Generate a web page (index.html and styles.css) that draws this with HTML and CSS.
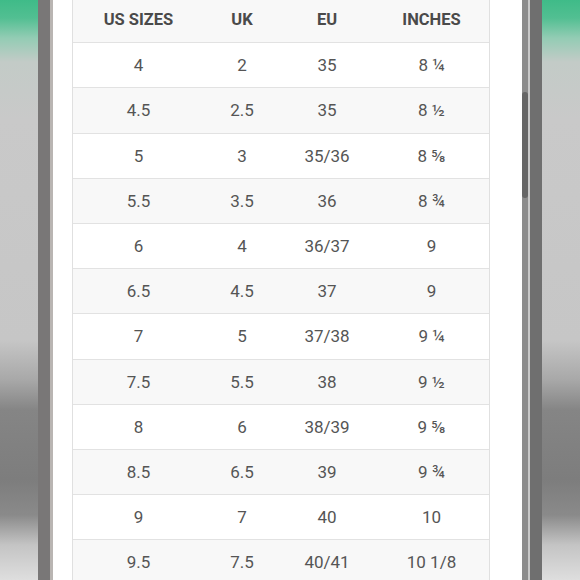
FILE: index.html
```html
<!DOCTYPE html>
<html>
<head>
<meta charset="utf-8">
<link rel="stylesheet" href="styles.css">
</head>
<body>
<div class="stage">
  <div class="bg bg-left"></div>
  <div class="frame-left"><div class="edge-dark"></div><div class="edge-light"></div></div>
  <div class="screen">
    <div class="table">
      <div class="row head"><div>US SIZES</div><div>UK</div><div>EU</div><div>INCHES</div></div>
      <div class="row"><div>4</div><div>2</div><div>35</div><div>8 ¼</div></div>
      <div class="row alt"><div>4.5</div><div>2.5</div><div>35</div><div>8 ½</div></div>
      <div class="row"><div>5</div><div>3</div><div>35/36</div><div>8 ⅝</div></div>
      <div class="row alt"><div>5.5</div><div>3.5</div><div>36</div><div>8 ¾</div></div>
      <div class="row"><div>6</div><div>4</div><div>36/37</div><div>9</div></div>
      <div class="row alt"><div>6.5</div><div>4.5</div><div>37</div><div>9</div></div>
      <div class="row"><div>7</div><div>5</div><div>37/38</div><div>9 ¼</div></div>
      <div class="row alt"><div>7.5</div><div>5.5</div><div>38</div><div>9 ½</div></div>
      <div class="row"><div>8</div><div>6</div><div>38/39</div><div>9 ⅝</div></div>
      <div class="row alt"><div>8.5</div><div>6.5</div><div>39</div><div>9 ¾</div></div>
      <div class="row"><div>9</div><div>7</div><div>40</div><div>10</div></div>
      <div class="row alt"><div>9.5</div><div>7.5</div><div>40/41</div><div>10 1/8</div></div>
    </div>
  </div>
  <div class="frame-right">
    <div class="track"><div class="thumb"></div></div>
    <div class="edge-light2"></div>
    <div class="edge-dark2"></div>
  </div>
  <div class="bg bg-right"></div>
</div>
</body>
</html>
```

FILE: styles.css
```css
html, body {
  margin: 0;
  padding: 0;
  width: 580px;
  height: 580px;
  overflow: hidden;
  background: #fff;
}
.stage {
  display: flex;
  width: 580px;
  height: 580px;
  overflow: hidden;
}
.bg {
  flex: none;
  height: 580px;
  background: linear-gradient(to bottom,
    #3fbb88 0px, #52bf92 18px, #93ccb4 38px, #c3cbc7 62px,
    #c9c9c9 120px, #c6c6c6 340px, #a8a8a8 380px, #858585 410px,
    #7d7d7d 480px, #8a8a8a 515px, #c4c4c4 545px, #dedede 580px);
}
.bg-left { width: 38px; }
.bg-right { width: 38px; }
.frame-left {
  flex: none;
  display: flex;
  width: 15px;
}
.edge-dark { width: 12px; background: #797777; }
.edge-light { width: 3px; background: #b9b5b2; }
.screen {
  flex: none;
  width: 469px;
  background: #fff;
  padding-left: 19px;
  box-sizing: border-box;
  overflow: hidden;
}
.table {
  width: 418px;
  margin-top: -2px;
  border-left: 1px solid #e0e0e0;
  border-right: 1px solid #e0e0e0;
  box-sizing: border-box;
  font-family: Roboto, "Noto Sans", sans-serif;
}
.row {
  display: grid;
  grid-template-columns: 131px 76px 94px 115px;
  height: 45.2px;
  box-sizing: border-box;
  border-bottom: 1.5px solid #e2e2e2;
  align-items: center;
  text-align: center;
  font-size: 17px;
  color: #555;
  background: #fff;
}
.row.alt { background: #f8f8f8; }
.row.head {
  background: #f8f8f8;
  font-weight: 700;
  font-size: 16.5px;
  color: #4a4a4a;
  padding-bottom: 2px;
}
.frame-right {
  flex: none;
  display: flex;
  width: 20px;
}
.track {
  width: 6px;
  background: #8c8c8c;
  padding-top: 92px;
  box-sizing: border-box;
}
.thumb {
  width: 6px;
  height: 106px;
  background: #666;
  border-radius: 3px;
}
.edge-light2 { width: 2px; background: #c8c8c8; }
.edge-dark2 { width: 12px; background: #6f6f6f; }
```
